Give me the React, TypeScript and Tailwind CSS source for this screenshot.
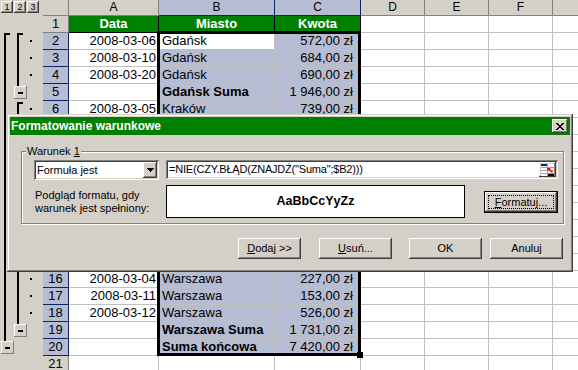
import React from "react";

type Row = { n: number; a?: string; b?: string; c?: string; bold?: boolean; hidden?: boolean };

const rows: Row[] = [
  { n: 2, a: "2008-03-06", b: "Gdańsk", c: "572,00 zł" },
  { n: 3, a: "2008-03-10", b: "Gdańsk", c: "684,00 zł" },
  { n: 4, a: "2008-03-20", b: "Gdańsk", c: "690,00 zł" },
  { n: 5, a: "", b: "Gdańsk Suma", c: "1 946,00 zł", bold: true },
  { n: 6, a: "2008-03-05", b: "Kraków", c: "739,00 zł" },
  { n: 7, hidden: true },
  { n: 8, hidden: true },
  { n: 9, hidden: true },
  { n: 10, hidden: true },
  { n: 11, hidden: true },
  { n: 12, hidden: true },
  { n: 13, hidden: true },
  { n: 14, hidden: true },
  { n: 15, hidden: true },
  { n: 16, a: "2008-03-04", b: "Warszawa", c: "227,00 zł" },
  { n: 17, a: "2008-03-11", b: "Warszawa", c: "153,00 zł" },
  { n: 18, a: "2008-03-12", b: "Warszawa", c: "526,00 zł" },
  { n: 19, a: "", b: "Warszawa Suma", c: "1 731,00 zł", bold: true },
  { n: 20, a: "", b: "Suma końcowa", c: "7 420,00 zł", bold: true },
  { n: 21 },
];

const raised =
  "bg-[#d4d0c8] shadow-[inset_-1px_-1px_#404040,inset_1px_1px_#ffffff,inset_-2px_-2px_#808080,inset_2px_2px_#d4d0c8]";
const sunken =
  "bg-white shadow-[inset_1px_1px_#808080,inset_-1px_-1px_#ffffff,inset_2px_2px_#404040,inset_-2px_-2px_#d4d0c8]";

function MinusBtn({ x, y }: { x: number; y: number }) {
  return (
    <g>
      <rect x={x} y={y} width={13} height={13} fill="#d4d0c8" />
      <rect x={x} y={y} width={12} height={1} fill="#ffffff" />
      <rect x={x} y={y} width={1} height={12} fill="#ffffff" />
      <rect x={x} y={y + 12} width={13} height={1} fill="#808080" />
      <rect x={x + 12} y={y} width={1} height={13} fill="#808080" />
      <rect x={x + 4} y={y + 6} width={5} height={2} fill="#000000" />
    </g>
  );
}

function Outline() {
  const dotRows = [2, 3, 4, 6, 7, 8, 10, 11, 12, 14, 15, 16, 17, 18];
  return (
    <svg
      width={43}
      height={357}
      viewBox="0 16 43 357"
      shapeRendering="crispEdges"
      className="block"
    >
      <rect x={4} y={33} width={2} height={308} fill="#000" />
      <rect x={4} y={33} width={6} height={2} fill="#000" />
      <rect x={17} y={33} width={2} height={53} fill="#000" />
      <rect x={17} y={33} width={6} height={2} fill="#000" />
      <rect x={17} y={102} width={2} height={222} fill="#000" />
      <rect x={17} y={102} width={6} height={2} fill="#000" />
      {dotRows.map((r) => (
        <rect key={r} x={30} y={33 + 17 * (r - 2) + 7} width={2} height={2} fill="#000" />
      ))}
      <MinusBtn x={14} y={86} />
      <MinusBtn x={14} y={324} />
      <MinusBtn x={1} y={341} />
    </svg>
  );
}

function XGlyph() {
  const px: [number, number][] = [];
  const pattern = [
    [0, 1, 6, 7],
    [1, 2, 5, 6],
    [2, 3, 4, 5],
    [3, 4],
    [2, 3, 4, 5],
    [1, 2, 5, 6],
    [0, 1, 6, 7],
  ];
  pattern.forEach((cols, y) => cols.forEach((x) => px.push([x, y])));
  return (
    <svg width={8} height={7} shapeRendering="crispEdges" className="block">
      {px.map(([x, y]) => (
        <rect key={`${x}-${y}`} x={x} y={y} width={1} height={1} fill="#000" />
      ))}
    </svg>
  );
}

function DropArrow() {
  return (
    <svg width={7} height={4} shapeRendering="crispEdges" className="block">
      <rect x={0} y={0} width={7} height={1} fill="#000" />
      <rect x={1} y={1} width={5} height={1} fill="#000" />
      <rect x={2} y={2} width={3} height={1} fill="#000" />
      <rect x={3} y={3} width={1} height={1} fill="#000" />
    </svg>
  );
}

function RangeIcon() {
  return (
    <svg width={13} height={12} shapeRendering="crispEdges" className="block">
      <rect x={0} y={0} width={13} height={12} fill="#ffffff" />
      <rect x={0} y={3} width={13} height={1} fill="#a0a0a0" />
      <rect x={0} y={6} width={13} height={1} fill="#a0a0a0" />
      <rect x={0} y={9} width={13} height={1} fill="#a0a0a0" />
      <rect x={6} y={0} width={1} height={12} fill="#a0a0a0" />
      <rect x={0} y={0} width={6} height={2} fill="#0a246a" />
      <rect x={7} y={10} width={6} height={2} fill="#000000" />
      <path d="M6 4 H10 L9 5 L12 8 L11 9 L8 6 L7 7 Z" fill="#ff0000" shapeRendering="auto" />
    </svg>
  );
}

function Sheet() {
  const cells: React.ReactNode[] = [];
  cells.push(
    <div key="ob" className="bg-[#d4d0c8] flex gap-[1px] pl-[1px] pt-[1px]">
      {["1", "2", "3"].map((t) => (
        <div
          key={t}
          className={`w-[12px] h-[12px] ${raised} flex items-center justify-center text-[9px] leading-[9px]`}
        >
          {t}
        </div>
      ))}
    </div>
  );
  cells.push(<div key="corner" className="bg-[#d4d0c8] border-r border-b border-[#808080]" />);
  ["A", "B", "C", "D", "E", "F", ""].forEach((l, i) => {
    const sel = l === "B" || l === "C";
    cells.push(
      <div
        key={`h${i}`}
        className={
          sel
            ? "bg-[#b6bdd2] border-r border-b border-[#0a246a] text-center text-[12px] leading-[15px]"
            : "bg-[#d4d0c8] border-r border-b border-[#808080] text-center text-[12px] leading-[15px]"
        }
      >
        {l}
      </div>
    );
  });
  cells.push(
    <div key="outline" className="row-span-21 bg-[#d4d0c8] overflow-hidden">
      <Outline />
    </div>
  );
  cells.push(
    <div key="r1" className="bg-[#d4d0c8] border-r border-b border-[#808080] text-center">
      1
    </div>
  );
  ["Data", "Miasto", "Kwota"].forEach((t) =>
    cells.push(
      <div
        key={`r1${t}`}
        className="bg-[#008000] border-r border-b border-black text-white font-bold text-center"
      >
        {t}
      </div>
    )
  );
  ["D", "E", "F", "G"].forEach((l) =>
    cells.push(<div key={`r1${l}`} className="bg-white border-r border-b border-[#c0c0c0]" />)
  );
  rows.forEach((r) => {
    const sel = r.n <= 20;
    cells.push(
      <div
        key={`rh${r.n}`}
        className={
          sel
            ? "bg-[#b6bdd2] border-r border-b border-[#0a246a] text-center"
            : "bg-[#d4d0c8] border-r border-b border-[#808080] text-center"
        }
      >
        {r.hidden ? "" : r.n}
      </div>
    );
    cells.push(
      <div
        key={`a${r.n}`}
        className="bg-white border-r border-b border-[#c0c0c0] text-right pr-[2px] whitespace-nowrap"
      >
        {r.a}
      </div>
    );
    const bBg = r.n === 2 || !sel ? "bg-white" : "bg-[#b6bdd2]";
    cells.push(
      <div
        key={`b${r.n}`}
        className={`${bBg} border-r border-b border-[#c0c0c0] pl-[3px] whitespace-nowrap ${
          r.bold ? "font-bold" : ""
        }`}
      >
        {r.b}
      </div>
    );
    cells.push(
      <div
        key={`c${r.n}`}
        className={`${
          sel ? "bg-[#b6bdd2]" : "bg-white"
        } border-r border-b border-[#c0c0c0] text-right pr-[7px] whitespace-nowrap`}
      >
        {r.c}
      </div>
    );
    ["D", "E", "F", "G"].forEach((l) =>
      cells.push(<div key={`${l}${r.n}`} className="bg-white border-r border-b border-[#c0c0c0]" />)
    );
  });
  return (
    <div className="grid grid-cols-[43px_26px_90px_116px_86px_64px_64px_64px_64px] grid-rows-[16px_repeat(21,17px)] text-[13px] leading-[16px]">
      {cells}
    </div>
  );
}

function Dialog() {
  return (
    <div className="absolute left-[7px] top-[114px] w-[566px] h-[158px] p-[3px] bg-[#d4d0c8] shadow-[inset_-1px_-1px_#404040,inset_1px_1px_#d4d0c8,inset_-2px_-2px_#808080,inset_2px_2px_#ffffff] flex flex-col text-[11px] leading-[13px] text-black">
      <div className="h-[18px] bg-[#008000] flex items-center pl-[1px] pr-[2px]">
        <span className="flex-1 text-white font-bold text-[12px] leading-[14px]">
          Formatowanie warunkowe
        </span>
        <div className={`w-[16px] h-[14px] flex items-center justify-center ${raised}`}>
          <XGlyph />
        </div>
      </div>
      <div className="relative ml-[11px] mt-[16px] w-[543px] h-[73px] border border-[#808080] shadow-[inset_1px_1px_#ffffff,1px_1px_#ffffff] pl-[12px] pt-[8px] flex flex-col">
        <span className="absolute left-[4px] top-[-7px] bg-[#d4d0c8] px-[1px]">
          Warunek <u>1</u>
        </span>
        <div className="flex gap-[7px]">
          <div className={`w-[125px] h-[20px] ${sunken} flex items-center`}>
            <span className="flex-1 pl-[3px]">Formuła jest</span>
            <div className={`w-[14px] h-[16px] mr-[2px] ${raised} flex items-center justify-center`}>
              <DropArrow />
            </div>
          </div>
          <div className={`w-[392px] h-[19px] ${sunken} flex items-center`}>
            <span className="flex-1 pl-[3px] whitespace-nowrap tracking-[-0.2px]">
              =NIE(CZY.BŁĄD(ZNAJDŹ("Suma";$B2)))
            </span>
            <div className={`w-[17px] h-[15px] mr-[2px] ${raised} flex items-center justify-center`}>
              <RangeIcon />
            </div>
          </div>
        </div>
        <div className="flex mt-[5px]">
          <div className="w-[132px] pl-[1px] pt-[4px]">
            Podgląd formatu, gdy
            <br />
            warunek jest spełniony:
          </div>
          <div className="w-[299px] h-[33px] bg-white border border-black flex items-center justify-center font-bold text-[12.5px]">
            AaBbCcYyZz
          </div>
          <div className="ml-[19px] mt-[6px] w-[74px] h-[22px] border border-black">
            <div className={`w-full h-full ${raised} p-[3px]`}>
              <div className="w-full h-full border border-dotted border-black flex items-center justify-center">
                <span>
                  <u>F</u>ormatuj...
                </span>
              </div>
            </div>
          </div>
        </div>
      </div>
      <div className="flex mt-[14px]">
        <div className={`ml-[228px] w-[63px] h-[21px] ${raised} flex items-center justify-center`}>
          <span>
            <u>D</u>odaj &gt;&gt;
          </span>
        </div>
        <div className={`ml-[18px] w-[73px] h-[21px] ${raised} flex items-center justify-center`}>
          <span>
            <u>U</u>suń...
          </span>
        </div>
        <div className={`ml-[17px] w-[73px] h-[21px] ${raised} flex items-center justify-center`}>
          OK
        </div>
        <div className={`ml-[8px] w-[73px] h-[21px] ${raised} flex items-center justify-center`}>
          Anuluj
        </div>
      </div>
    </div>
  );
}

export default function App() {
  return (
    <div className="relative w-[578px] h-[370px] overflow-hidden bg-white font-['Liberation_Sans',Arial,sans-serif] text-black">
      <Sheet />
      <div className="absolute left-[157px] top-[31px] w-[204px] h-[325px] border-[3px] border-black pointer-events-none" />
      <div className="absolute left-[357px] top-[352px] w-[6px] h-[6px] bg-black pointer-events-none" />
      <Dialog />
    </div>
  );
}
